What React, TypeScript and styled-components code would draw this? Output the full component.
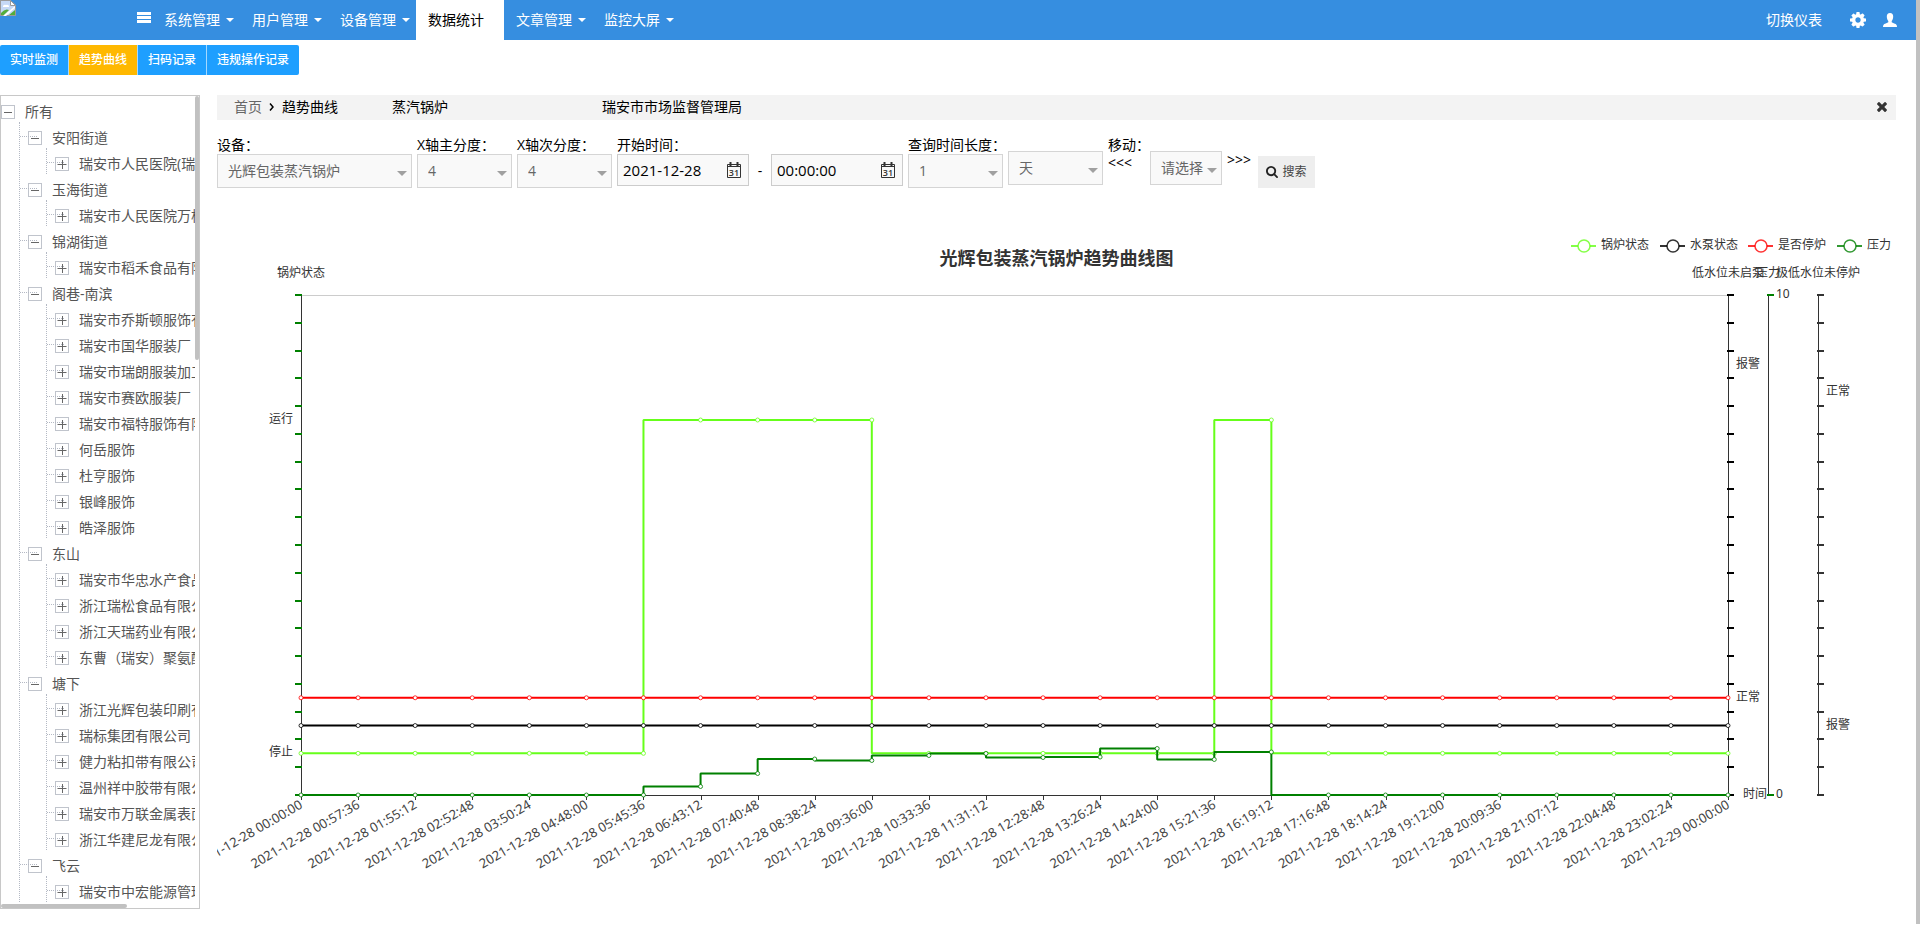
import React, { useLayoutEffect, useRef, useState } from "react";
import styled, { createGlobalStyle } from "styled-components";

const GlobalStyle = createGlobalStyle`
  * { box-sizing: border-box; }
  body {
    margin: 0;
    background: #fff;
    color: #000;
    font: 14px/18px "Open Sans", "Noto Sans CJK SC", sans-serif;
  }
  button, input, select { font: inherit; margin: 0; }
  button { cursor: pointer; border: 0; padding: 0; background: none; color: inherit; }
  a { color: inherit; text-decoration: none; }
  ul { list-style: none; margin: 0; padding: 0; }
`;

/* ---------- page frame ---------- */

const Shell = styled.div`
  display: flex;
  min-height: 100vh;
`;

const Page = styled.div`
  flex: 1;
  min-width: 0;
`;

const PageScrollbar = styled.div`
  width: 4px;
  height: calc(100vh - 10px);
  background: #c1c1c1;
`;

/* ---------- top bar ---------- */

const TopBar = styled.header`
  display: flex;
  height: 40px;
  padding-right: 18px;
  background: #368ee0;
  color: #fff;
`;

const Logo = styled.a`
  width: 137px;
  height: 40px;
`;

const MenuToggle = styled.button`
  display: flex;
  align-items: center;
  width: 15px;
  height: 36px;
`;

const Nav = styled.nav`
  display: flex;
  flex: 1;
`;

const NavItem = styled.a<{ $active?: boolean }>`
  display: flex;
  align-items: center;
  gap: 6px;
  width: 88px;
  padding: 0 6px 0 12px;
  white-space: nowrap;
  background: ${(p) => (p.$active ? "#fff" : "transparent")};
  color: ${(p) => (p.$active ? "#000" : "#fff")};
`;

const NavCaret = styled.span`
  border: 4px solid transparent;
  border-top-color: #fff;
  border-bottom: 0;
`;

const TopActions = styled.div`
  display: flex;
  align-items: center;
  gap: 16px;
`;

const SwitchLink = styled.a`
  margin-right: 12px;
`;

const IconButton = styled.button`
  display: flex;
`;

/* ---------- tabs ---------- */

const Tabs = styled.nav`
  display: flex;
  padding: 5px 0 20px;
`;

const Tab = styled.a<{ $active?: boolean }>`
  height: 30px;
  padding: 0 10px;
  font-size: 12px;
  font-weight: 500;
  line-height: 30px;
  color: #fff;
  background: ${(p) => (p.$active ? "#ffb800" : "#1e9fff")};
  &:first-child { border-radius: 2px 0 0 2px; }
  &:last-child { border-radius: 0 2px 2px 0; }
  & + & { border-left: 1px solid #a5d9ff; }
`;

const Body = styled.div`
  display: flex;
  gap: 17px;
  padding-right: 20px;
`;

/* ---------- tree ---------- */

const Sidebar = styled.aside`
  position: relative;
  flex: none;
  width: 200px;
  height: calc(100vh - 120px);
  padding-right: 4px;
  border: 1px solid #c8c8c8;
`;

const TreeViewport = styled.div`
  height: 100%;
  overflow: hidden;
`;

const ScrollThumb = styled.div<{ $horizontal?: boolean }>`
  position: absolute;
  border-radius: 2px;
  background: #c1c1c1;
  ${(p) =>
    p.$horizontal
      ? "left: 0; bottom: 0; width: 126px; height: 4px;"
      : "right: 0; top: 0; width: 4px; height: 264px;"}
`;

const Branch = styled.ul<{ $depth: number }>`
  margin-left: ${(p) => (p.$depth === 1 ? 18 : 26)}px;
  border-left: 1px dotted #b4b9c4;
`;

const TreeRow = styled.div<{ $nested?: boolean }>`
  position: relative;
  display: flex;
  align-items: center;
  gap: 10px;
  height: 26px;
  padding-top: 6px;
  padding-left: ${(p) => (p.$nested ? 8 : 0)}px;
  color: #555;
  white-space: nowrap;
  &::before {
    content: "";
    display: ${(p) => (p.$nested ? "block" : "none")};
    position: absolute;
    left: 0;
    top: 14px;
    width: 17px;
    border-top: 1px dotted #b4b9c4;
  }
`;

const Expander = styled.button`
  flex: none;
  display: flex;
  align-items: center;
  justify-content: center;
  width: 14px;
  height: 14px;
  border: 1px solid #c0c4cc;
`;

interface TreeGroup {
  name: string;
  children: string[];
}

const GROUPS: TreeGroup[] = [
  { name: "安阳街道", children: ["瑞安市人民医院(瑞祥院区)"] },
  { name: "玉海街道", children: ["瑞安市人民医院万松院区"] },
  { name: "锦湖街道", children: ["瑞安市稻禾食品有限公司"] },
  {
    name: "阁巷-南滨",
    children: [
      "瑞安市乔斯顿服饰有限公司",
      "瑞安市国华服装厂",
      "瑞安市瑞朗服装加工厂",
      "瑞安市赛欧服装厂",
      "瑞安市福特服饰有限公司",
      "何岳服饰",
      "杜亨服饰",
      "银峰服饰",
      "皓泽服饰",
    ],
  },
  {
    name: "东山",
    children: [
      "瑞安市华忠水产食品有限公司",
      "浙江瑞松食品有限公司",
      "浙江天瑞药业有限公司",
      "东曹（瑞安）聚氨酯有限公司",
    ],
  },
  {
    name: "塘下",
    children: [
      "浙江光辉包装印刷有限公司",
      "瑞标集团有限公司",
      "健力粘扣带有限公司",
      "温州祥中胶带有限公司",
      "瑞安市万联金属表面处理",
      "浙江华建尼龙有限公司",
    ],
  },
  { name: "飞云", children: ["瑞安市中宏能源管理有限公司"] },
];

function TreeNode({ name, open, nested }: { name: string; open?: boolean; nested?: boolean }) {
  return (
    <TreeRow $nested={nested}>
      <Expander aria-label={name} aria-expanded={!!open}>
        <svg width="10" height="10" viewBox="0 0 10 10" stroke="#666" fill="none">
          <path d={open ? "M1 5.5H9" : "M0.5 5.5H9.5M5.5 1V10"} />
        </svg>
      </Expander>
      <span>{name}</span>
    </TreeRow>
  );
}

/* ---------- content ---------- */

const Content = styled.main`
  flex: 1;
  min-width: 0;
`;

const Crumbs = styled.div`
  display: flex;
  align-items: center;
  height: 25px;
  padding: 0 9px 1px 17px;
  background: #f3f3f3;
`;

const HomeLink = styled.a`
  color: #666;
`;

const CrumbArrow = styled.svg`
  margin: 0 8px 0 7px;
`;

const CrumbText = styled.span<{ $gap?: number }>`
  margin-left: ${(p) => p.$gap ?? 0}px;
`;

const CloseButton = styled.button`
  display: flex;
  margin-left: auto;
`;

const Filters = styled.form`
  display: flex;
  align-items: flex-start;
  gap: 5px;
  padding: 16px 0 32px;
`;

const Field = styled.div<{ $width?: number; $top?: number }>`
  flex: none;
  width: ${(p) => (p.$width ? `${p.$width}px` : "auto")};
  padding-top: ${(p) => p.$top ?? 0}px;
  white-space: nowrap;
`;

const FieldLabel = styled.label`
  display: block;
  height: 18px;
`;

const SelectBox = styled.div`
  position: relative;
  &::after {
    content: "";
    position: absolute;
    right: 5px;
    top: 17px;
    border: 5px solid transparent;
    border-top-color: #a0a0a0;
    border-bottom: 0;
    pointer-events: none;
  }
`;

const Select = styled.select`
  appearance: none;
  display: block;
  width: 100%;
  height: 34px;
  padding: 0 0 0 10px;
  border: 1px solid #d5d5d5;
  border-radius: 0;
  background: #f9f9f9;
  color: #666;
`;

const Range = styled.div`
  display: flex;
`;

const Dash = styled.span`
  width: 22px;
  line-height: 34px;
  text-align: center;
`;

const PickerBox = styled.div`
  display: flex;
  align-items: center;
  width: 132px;
  height: 32px;
  padding: 0 7px 0 5px;
  border: 1px solid #ccc;
  background: #f9f9f9;
`;

const PickerInput = styled.input`
  flex: 1;
  min-width: 0;
  height: 24px;
  padding: 0;
  border: 0;
  background: none;
  font-size: 15px;
`;

const SearchButton = styled.button`
  display: flex;
  align-items: center;
  justify-content: center;
  gap: 4px;
  width: 57px;
  height: 32px;
  margin-top: 20px;
  background: #eee;
  color: #444;
  font-size: 12px;
`;

function Dropdown({ id, label, value }: { id: string; label?: string; value: string }) {
  return (
    <SelectBox>
      <Select id={id} aria-label={label} defaultValue={value}>
        <option>{value}</option>
      </Select>
    </SelectBox>
  );
}

function CalendarIcon() {
  return (
    <svg width="14" height="16" viewBox="0 0 14 16" fill="none" stroke="#333">
      <path d="M0.5 2.5H13.500V15.500H0.500ZM1 4.500H13" />
      <path d="M3.500 0V4M10.500 0V4" strokeWidth="2" />
      <text x="7" y="14" textAnchor="middle" fontSize="9" fontWeight="600" fill="#333" stroke="none">31</text>
    </svg>
  );
}

/* ---------- chart ---------- */

const ChartFrame = styled.div`
  height: 660px;
  overflow: hidden;
`;

const ChartSvg = styled.svg`
  display: block;
  font-family: "Noto Sans", "Noto Sans CJK SC", sans-serif;
  font-size: 12px;
`;

const PLOT_TOP = 75;
const PLOT_HEIGHT = 500;
const PLOT_BOTTOM = PLOT_TOP + PLOT_HEIGHT;
const PLOT_LEFT = 84;
const PLOT_RIGHT_GAP = 168;
const TICKS = 18;
const STEPS = 25;

const fill = (count: number, value: number) => Array<number>(count).fill(value);

const boiler = [...fill(7, 1.5), ...fill(4, 13.5), ...fill(6, 1.5), 13.5, ...fill(8, 1.5)];
const pump = fill(26, 2.5);
const stopped = fill(26, 3.5);
const pressure = [
  ...fill(7, 0), 0.17, 0.43, 0.72, 0.69, 0.79, 0.83, 0.75, 0.76, 0.93, 0.71, 0.86, ...fill(8, 0),
];

const SERIES = [
  { name: "锅炉状态", color: "#66ff1a", max: 18, data: boiler },
  { name: "水泵状态", color: "#000000", max: 18, data: pump },
  { name: "是否停炉", color: "#ff0000", max: 18, data: stopped },
  { name: "压力", color: "#008000", max: 10, data: pressure },
];

const two = (n: number) => String(n).padStart(2, "0");

function timeLabel(index: number) {
  const seconds = index * 3456;
  const day = seconds >= 86400 ? 29 : 28;
  const s = seconds % 86400;
  return `2021-12-${day} ${two(Math.floor(s / 3600))}:${two(Math.floor(s / 60) % 60)}:${two(s % 60)}`;
}

function AxisTicks({ from, to, color, count = TICKS }: { from: number; to: number; color: string; count?: number }) {
  return (
    <g stroke={color} strokeWidth="2">
      {Array.from({ length: count + 1 }, (_, i) => {
        const y = Math.round(PLOT_TOP + (PLOT_HEIGHT / count) * i);
        return <line key={i} x1={from} x2={to} y1={y} y2={y} />;
      })}
    </g>
  );
}

function TrendChart() {
  const frame = useRef<HTMLDivElement>(null);
  const [width, setWidth] = useState(1200);

  useLayoutEffect(() => {
    const node = frame.current;
    if (!node) return;
    const measure = () => setWidth(node.clientWidth);
    measure();
    const observer = new ResizeObserver(measure);
    observer.observe(node);
    return () => observer.disconnect();
  }, []);

  const right = width - PLOT_RIGHT_GAP;
  const second = right + 40;
  const third = right + 90;
  const xAt = (i: number) => PLOT_LEFT + ((right - PLOT_LEFT) / STEPS) * i;
  const yAt = (value: number, max: number) => PLOT_BOTTOM - (value / max) * PLOT_HEIGHT;

  return (
    <ChartFrame ref={frame}>
      <ChartSvg width={width} height="660" role="img" aria-label="光辉包装蒸汽锅炉趋势曲线图">
        <text x={width / 2} y="45" textAnchor="middle" fontSize="18" fontWeight="700" fill="#333">
          光辉包装蒸汽锅炉趋势曲线图
        </text>

        {SERIES.map((s, i) => {
          const x = width - 325 + Math.round(i * 88.6);
          return (
            <g key={s.name}>
              <path d={`M${x} 26H${x + 25}`} stroke={s.color} strokeWidth="2" opacity="0.8" />
              <circle cx={x + 13} cy="26" r="6" fill="#fff" stroke={s.color} strokeOpacity="0.8" strokeWidth="1.5" />
              <text x={x + 30} y="29" fill="#333">{s.name}</text>
            </g>
          );
        })}

        <g fill="#333" textAnchor="middle">
          <text x={PLOT_LEFT} y="57">锅炉状态</text>
          <text x={right} y="57">低水位未启泵</text>
          <text x={second} y="57">压力</text>
          <text x={third} y="57">极低水位未停炉</text>
        </g>

        <path d={`M${PLOT_LEFT} ${PLOT_TOP + 0.5}H${right}`} stroke="#ccc" />
        <g stroke="#333">
          {[PLOT_LEFT, right, second, third].map((x) => (
            <line key={x} x1={x + 0.5} x2={x + 0.5} y1={PLOT_TOP} y2={PLOT_BOTTOM + 1} />
          ))}
          <line x1={PLOT_LEFT} x2={right} y1={PLOT_BOTTOM + 0.5} y2={PLOT_BOTTOM + 0.5} />
          {fill(26, 0).map((_, i) => {
            const x = Math.round(xAt(i)) + 0.5;
            return <line key={i} x1={x} x2={x} y1={PLOT_BOTTOM} y2={PLOT_BOTTOM + 5} />;
          })}
        </g>
        <AxisTicks from={PLOT_LEFT - 6} to={PLOT_LEFT + 1} color="#008000" />
        <AxisTicks from={right - 1} to={right + 6} color="#000" />
        <AxisTicks from={second - 1} to={second + 6} color="#008000" count={1} />
        <AxisTicks from={third - 1} to={third + 6} color="#333" />

        <g fill="#333">
          <text x={PLOT_LEFT - 8} y="203" textAnchor="end">运行</text>
          <text x={PLOT_LEFT - 8} y="536" textAnchor="end">停止</text>
          <text x={right + 8} y="148">报警</text>
          <text x={right + 8} y="481">正常</text>
          <text x={right + 15} y="578">时间</text>
          <text x={second + 8} y="78">10</text>
          <text x={second + 8} y="578">0</text>
          <text x={third + 8} y="175">正常</text>
          <text x={third + 8} y="509">报警</text>
        </g>

        <g fill="#444" fontSize="13" textAnchor="end">
          {fill(26, 0).map((_, i) => (
            <text key={i} transform={`translate(${xAt(i)} ${PLOT_BOTTOM + 8}) rotate(-30)`} y="5">
              {timeLabel(i)}
            </text>
          ))}
        </g>

        {SERIES.map((s) => {
          const points = s.data.map((v, i) => ({ x: xAt(i), y: yAt(v, s.max) }));
          const path = points
            .map((p, i) => (i === 0 ? `M${p.x} ${p.y}` : `V${p.y}H${p.x}`))
            .join("");
          return (
            <g key={s.name} stroke={s.color} fill="none">
              <path d={path} strokeWidth="2" strokeLinejoin="bevel" />
              {points.map((p, i) => (
                <circle key={i} cx={p.x} cy={p.y} r="2" fill="#fff" strokeOpacity="0.8" />
              ))}
            </g>
          );
        })}
      </ChartSvg>
    </ChartFrame>
  );
}

/* ---------- icons ---------- */

const COG =
  "M1152 896q0-106-75-181t-181-75-181 75-75 181 75 181 181 75 181-75 75-181zm512-109v222q0 12-8 23t-20 13l-185 28q-19 54-39 91 35 50 107 138 10 12 10 25t-9 23q-27 37-99 108t-94 71q-12 0-26-9l-138-108q-44 23-91 38-16 136-29 186-7 28-36 28h-222q-14 0-24.5-8.5t-11.5-21.5l-28-184q-49-16-90-37l-141 107q-10 9-25 9-14 0-25-11-126-114-165-168-7-10-7-23 0-12 8-23 15-21 51-66.5t54-70.5q-27-50-41-99l-183-27q-13-2-21-12.5t-8-23.5v-222q0-12 8-23t19-13l186-28q14-46 39-92-40-57-107-138-10-12-10-24 0-10 9-23 26-36 98.5-107.5t94.5-71.5q13 0 26 10l138 107q44-23 91-38 16-136 29-186 7-28 36-28h222q14 0 24.5 8.5t11.5 21.5l28 184q49 16 90 37l142-107q9-9 24-9 13 0 25 10 129 119 165 170 7 8 7 22 0 12-8 23-15 21-51 66.5t-54 70.5q26 50 41 98l183 28q13 2 21 12.5t8 23.5z";
const SEARCH =
  "M1216 832q0-185-131.5-316.5t-316.5-131.5-316.5 131.5-131.5 316.5 131.5 316.5 316.5 131.5 316.5-131.5 131.5-316.5zm512 832q0 52-38 90t-90 38q-54 0-90-38l-343-342q-179 124-399 124-143 0-273.5-55.5t-225-150-150-225-55.5-273.5 55.5-273.5 150-225 225-150 273.5-55.5 273.5 55.5 225 150 150 225 55.5 273.5q0 220-124 399l343 343q37 37 37 90z";
const TIMES =
  "M1490 1322q0 40-28 68l-136 136q-28 28-68 28t-68-28l-294-294-294 294q-28 28-68 28t-68-28l-136-136q-28-28-28-68t28-68l294-294-294-294q-28-28-28-68t28-68l136-136q28-28 68-28t68 28l294 294 294-294q28-28 68-28t68 28l136 136q28 28 28 68t-28 68l-294 294 294 294q28 28 28 68z";

function BrokenImage() {
  return (
    <svg width="16" height="16" viewBox="0 0 16 16">
      <path d="M0.5 0V15.5H15.5V5L10.5 0.5H0" fill="#c6d9f6" stroke="#9a9a9a" />
      <path d="M10.5 0.5V5.5H15.5Z" fill="#fff" stroke="#9a9a9a" />
      <path d="M3 7a2 2 0 0 1 3-2a2 2 0 0 1 3 2Z" fill="#fff" />
      <path d="M1 15V13Q5 8 9 10L4 15Z" fill="#54ad3b" />
      <path d="M3 16L15 6V8L6 16Z" fill="#fff" />
      <path d="M9 15L15 10V15Z" fill="#54ad3b" />
    </svg>
  );
}

const NAV = ["系统管理", "用户管理", "设备管理", "数据统计", "文章管理", "监控大屏"];
const TABS = ["实时监测", "趋势曲线", "扫码记录", "违规操作记录"];

export default function App() {
  return (
    <>
      <GlobalStyle />
      <Shell>
        <Page>
          <TopBar>
            <Logo href="#" aria-label="首页">
              <BrokenImage />
            </Logo>
            <MenuToggle aria-label="菜单">
              <svg width="14" height="12" viewBox="0 0 14 12" fill="#fff">
                <path d="M0 0H14V3H0ZM0 4H14V7H0ZM0 8H14V11H0Z" />
              </svg>
            </MenuToggle>
            <Nav>
              {NAV.map((name) => {
                const active = name === "数据统计";
                return (
                  <NavItem key={name} href="#" $active={active}>
                    {name}
                    {!active && <NavCaret />}
                  </NavItem>
                );
              })}
            </Nav>
            <TopActions>
              <SwitchLink href="#">切换仪表</SwitchLink>
              <IconButton aria-label="设置">
                <svg width="16" height="16" viewBox="128 128 1536 1536" fill="#fff"><path d={COG} /></svg>
              </IconButton>
              <IconButton aria-label="用户">
                <svg width="16" height="16" viewBox="0 0 16 16" fill="#fff">
                  <path d="M8 1C10.2 1 11.3 2.6 11.2 4.8C11.1 6.6 10.5 8.2 9.7 9V10.3C10.5 11.2 14 11.6 14.6 13Q15 13.8 15 15H1Q1 13.8 1.4 13C2 11.6 5.500 11.200 6.300 10.300V9C5.500 8.200 4.900 6.600 4.800 4.800C4.700 2.600 5.800 1 8 1Z" />
                </svg>
              </IconButton>
            </TopActions>
          </TopBar>

          <Tabs>
            {TABS.map((name) => (
              <Tab key={name} href="#" $active={name === "趋势曲线"}>{name}</Tab>
            ))}
          </Tabs>

          <Body>
            <Sidebar>
              <TreeViewport>
                <TreeNode name="所有" open />
                <Branch $depth={1}>
                  {GROUPS.map((group) => (
                    <li key={group.name}>
                      <TreeNode name={group.name} open nested />
                      <Branch $depth={2}>
                        {group.children.map((child) => (
                          <li key={child}><TreeNode name={child} nested /></li>
                        ))}
                      </Branch>
                    </li>
                  ))}
                </Branch>
              </TreeViewport>
              <ScrollThumb />
              <ScrollThumb $horizontal />
            </Sidebar>

            <Content>
              <Crumbs>
                <HomeLink href="#">首页</HomeLink>
                <CrumbArrow width="5" height="8" viewBox="0 0 5 8" fill="none" stroke="#000">
                  <path d="M1 0.500L4 4L1 7.500" strokeWidth="1.500" />
                </CrumbArrow>
                <CrumbText>趋势曲线</CrumbText>
                <CrumbText $gap={54}>蒸汽锅炉</CrumbText>
                <CrumbText $gap={154}>瑞安市市场监督管理局</CrumbText>
                <CloseButton aria-label="关闭">
                  <svg width="10" height="10" viewBox="302 366 1188 1188" fill="#333"><path d={TIMES} /></svg>
                </CloseButton>
              </Crumbs>

              <Filters onSubmit={(e) => e.preventDefault()}>
                <Field $width={195}>
                  <FieldLabel htmlFor="device">设备：</FieldLabel>
                  <Dropdown id="device" value="光辉包装蒸汽锅炉" />
                </Field>
                <Field $width={95}>
                  <FieldLabel htmlFor="major">X轴主分度：</FieldLabel>
                  <Dropdown id="major" value="4" />
                </Field>
                <Field $width={95}>
                  <FieldLabel htmlFor="minor">X轴次分度：</FieldLabel>
                  <Dropdown id="minor" value="4" />
                </Field>
                <Field>
                  <FieldLabel htmlFor="date">开始时间：</FieldLabel>
                  <Range>
                    <PickerBox>
                      <PickerInput id="date" defaultValue="2021-12-28" />
                      <CalendarIcon />
                    </PickerBox>
                    <Dash>-</Dash>
                    <PickerBox>
                      <PickerInput aria-label="时间" defaultValue="00:00:00" />
                      <CalendarIcon />
                    </PickerBox>
                  </Range>
                </Field>
                <Field $width={95}>
                  <FieldLabel htmlFor="length">查询时间长度：</FieldLabel>
                  <Dropdown id="length" value="1" />
                </Field>
                <Field $width={95} $top={15}>
                  <Dropdown id="unit" label="单位" value="天" />
                </Field>
                <Field $width={37}>
                  <FieldLabel htmlFor="move">移动：</FieldLabel>
                  <button type="button">&lt;&lt;&lt;</button>
                </Field>
                <Field $width={72} $top={15}>
                  <Dropdown id="move" value="请选择" />
                </Field>
                <Field $width={26} $top={15}>
                  <button type="button">&gt;&gt;&gt;</button>
                </Field>
                <SearchButton>
                  <svg width="12" height="12" viewBox="64 128 1664 1664" fill="#222"><path d={SEARCH} /></svg>
                  搜索
                </SearchButton>
              </Filters>

              <TrendChart />
            </Content>
          </Body>
        </Page>
        <PageScrollbar />
      </Shell>
    </>
  );
}
